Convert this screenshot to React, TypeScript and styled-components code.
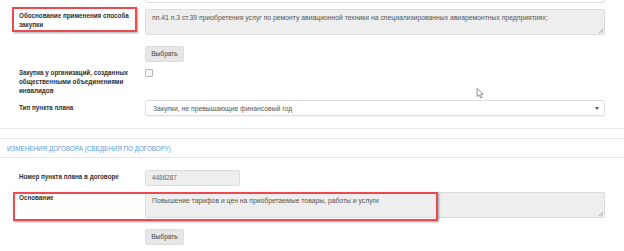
import React from 'react';
import styled, { createGlobalStyle } from 'styled-components';

const GlobalStyle = createGlobalStyle`
html, body {
    margin: 0;
    padding: 0;
    background: #ffffff;
}
body {
    font-family: "Liberation Sans", Arial, Helvetica, sans-serif;
    color: #333333;
}
`;

export const Page = styled.div`
width: 624px;
height: 251px;
overflow: hidden;
position: relative;
background: #ffffff;
`;

export const FormRow = styled.div<{ top: number }>`
display: grid;
grid-template-columns: 145px 460px;
margin-top: ${props => props.top}px;
position: relative;
`;

export const Label = styled.div<{ pad?: number }>`
padding: ${props => props.pad ?? 0}px 6px 0 19px;
font-size: 6.3px;
font-weight: bold;
line-height: 9px;
color: #2f2f2f;
`;

export const PrevInput = styled.div`
height: 3px;
border: 1px solid #dddddd;
border-top: none;
border-radius: 0 0 2px 2px;
box-sizing: border-box;
`;

export const TextArea = styled.div<{ h: number }>`
position: relative;
height: ${props => props.h}px;
box-sizing: border-box;
background: #eeeeee;
border: 1px solid #dcdcdc;
border-radius: 2px;
padding: 4px 6px;
font-size: 6.8px;
line-height: 8px;
color: #555555;
white-space: nowrap;
overflow: hidden;
&::after {
    content: "";
    position: absolute;
    right: 1px;
    bottom: 1px;
    width: 4px;
    height: 4px;
    background: linear-gradient(135deg, transparent 45%, #aaaaaa 45%, #aaaaaa 55%, transparent 55%, transparent 70%, #aaaaaa 70%, #aaaaaa 80%, transparent 80%);
}
`;

export const Button = styled.div`
width: 39px;
height: 16px;
box-sizing: border-box;
background: #e6e6e6;
border: 1px solid #dddddd;
border-radius: 2px;
font-size: 6.6px;
line-height: 14px;
text-align: center;
color: #444444;
`;

export const CheckBox = styled.div`
width: 6px;
height: 6px;
margin-top: 1px;
border: 1px solid #b5b5b5;
border-radius: 1px;
background: #f4f4f4;
`;

export const Select = styled.div`
height: 16px;
box-sizing: border-box;
border: 1px solid #dddddd;
border-radius: 2px;
padding: 0 5px 0 7px;
display: flex;
align-items: center;
justify-content: space-between;
font-size: 6.8px;
color: #555555;
background: #ffffff;
box-shadow: 0 1px 1px rgba(0, 0, 0, 0.04);
`;

export const Caret = styled.span`
width: 0;
height: 0;
border-left: 2px solid transparent;
border-right: 2px solid transparent;
border-top: 3px solid #555555;
`;

export const Input = styled.div`
width: 95px;
height: 16px;
box-sizing: border-box;
background: #eeeeee;
border: 1px solid #dcdcdc;
border-radius: 2px;
padding: 0 6px;
font-size: 6.4px;
line-height: 14px;
color: #666666;
`;

export const Divider = styled.div<{ top: number }>`
margin-top: ${props => props.top}px;
border-top: 1px solid #e6e6e6;
`;

export const SectionHeader = styled.div`
margin-top: 9px;
height: 20px;
box-sizing: border-box;
border-top: 1px solid #e6e6e6;
border-bottom: 1px solid #e6e6e6;
padding-left: 7px;
display: flex;
align-items: center;
font-size: 6.3px;
color: #5a9bd4;
`;

export const Highlight = styled.div<{ left: number; top: number; w: number; h: number }>`
position: absolute;
left: ${props => props.left}px;
top: ${props => props.top}px;
width: ${props => props.w}px;
height: ${props => props.h}px;
box-sizing: border-box;
border: 2px solid #ea4a50;
box-shadow: 1px 1px 2px rgba(0, 0, 0, 0.35);
pointer-events: none;
`;

export const Cursor = styled.svg`
position: absolute;
left: 476px;
top: 88px;
`;

function App() {
    return (
        <>
            <GlobalStyle />
            <Page>
                <FormRow top={0}>
                    <div />
                    <PrevInput />
                </FormRow>

                <FormRow top={6}>
                    <Label pad={2}>Обоснование применения способа закупки</Label>
                    <TextArea h={26}>
                        пп.41 п.3 ст.39 приобретения услуг по ремонту авиационной техники на специализированных авиаремонтных предприятиях;
                    </TextArea>
                    <Highlight left={12} top={-2} w={125} h={25} />
                </FormRow>

                <FormRow top={11}>
                    <div />
                    <Button>Выбрать</Button>
                </FormRow>

                <FormRow top={6}>
                    <Label>Закупка у организаций, созданных общественными объединениями инвалидов</Label>
                    <CheckBox />
                </FormRow>

                <FormRow top={5}>
                    <Label pad={3}>Тип пункта плана</Label>
                    <Select>
                        Закупки, не превышающие финансовый год
                        <Caret />
                    </Select>
                </FormRow>

                <Divider top={12} />
                <SectionHeader>ИЗМЕНЕНИЯ ДОГОВОРА (СВЕДЕНИЯ ПО ДОГОВОРУ)</SectionHeader>

                <FormRow top={12}>
                    <Label pad={2}>Номер пункта плана в договоре</Label>
                    <Input>4486287</Input>
                </FormRow>

                <FormRow top={6}>
                    <Label pad={1}>Основание</Label>
                    <TextArea h={26}>
                        Повышение тарифов и цен на приобретаемые товары, работы и услуги
                    </TextArea>
                    <Highlight left={13} top={0} w={425} h={29} />
                </FormRow>

                <FormRow top={11}>
                    <div />
                    <Button>Выбрать</Button>
                </FormRow>

                <Cursor width="10" height="11" viewBox="0 0 10 11">
                    <path d="M1 0.5 L1 8.5 L3 6.8 L4.6 10 L6 9.3 L4.5 6.3 L7.2 6.3 Z" fill="#ffffff" stroke="#777777" strokeWidth="0.8" strokeLinejoin="round" />
                </Cursor>
            </Page>
        </>
    );
}

export default App;
